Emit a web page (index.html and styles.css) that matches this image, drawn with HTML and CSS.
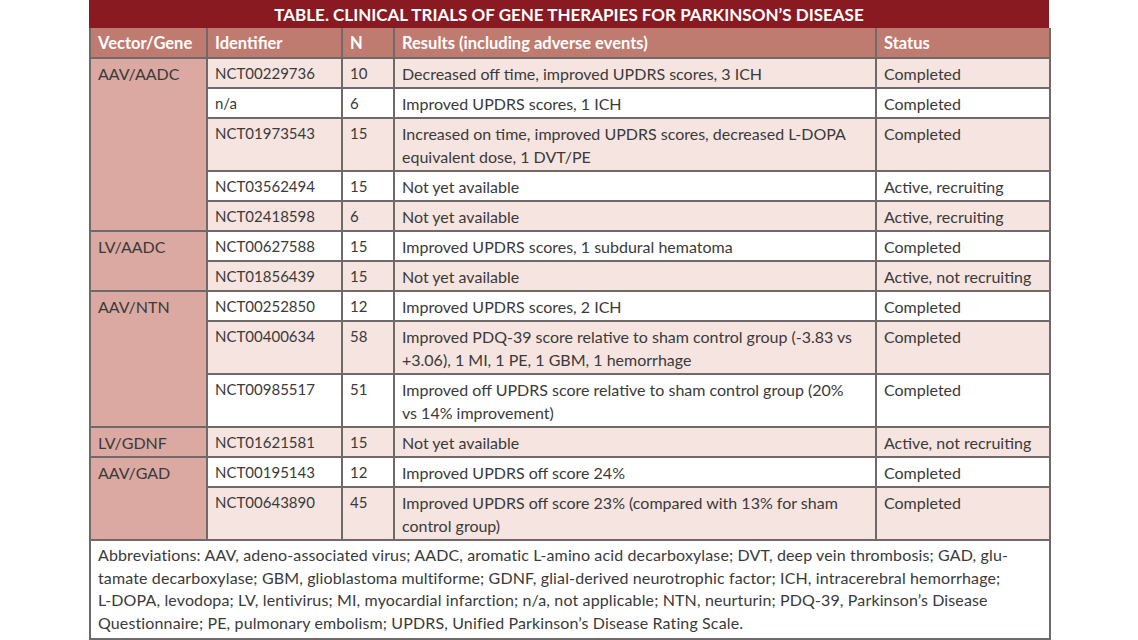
FILE: index.html
```html
<!DOCTYPE html>
<html>
<head>
<meta charset="utf-8">
<link rel="stylesheet" href="styles.css">
</head>
<body>
<div class="wrap">
  <div class="title">TABLE. CLINICAL TRIALS OF GENE THERAPIES FOR PARKINSON’S DISEASE</div>
  <table class="trials">
    <colgroup>
      <col class="c-vec"><col class="c-id"><col class="c-n"><col class="c-res"><col class="c-stat">
    </colgroup>
    <thead>
      <tr><th>Vector/Gene</th><th>Identifier</th><th>N</th><th>Results (including adverse events)</th><th>Status</th></tr>
    </thead>
    <tbody>
      <tr class="odd"><td class="vec" rowspan="5">AAV/AADC</td><td class="id">NCT00229736</td><td class="num">10</td><td class="res">Decreased off time, improved UPDRS scores, 3 ICH</td><td>Completed</td></tr>
      <tr><td class="id">n/a</td><td class="num">6</td><td class="res">Improved UPDRS scores, 1 ICH</td><td>Completed</td></tr>
      <tr class="odd"><td class="id">NCT01973543</td><td class="num">15</td><td class="res">Increased on time, improved UPDRS scores, decreased L-DOPA equivalent dose, 1 DVT/PE</td><td>Completed</td></tr>
      <tr><td class="id">NCT03562494</td><td class="num">15</td><td class="res">Not yet available</td><td>Active, recruiting</td></tr>
      <tr class="odd"><td class="id">NCT02418598</td><td class="num">6</td><td class="res">Not yet available</td><td>Active, recruiting</td></tr>
      <tr><td class="vec" rowspan="2">LV/AADC</td><td class="id">NCT00627588</td><td class="num">15</td><td class="res">Improved UPDRS scores, 1 subdural hematoma</td><td>Completed</td></tr>
      <tr class="odd"><td class="id">NCT01856439</td><td class="num">15</td><td class="res">Not yet available</td><td>Active, not recruiting</td></tr>
      <tr><td class="vec" rowspan="3">AAV/NTN</td><td class="id">NCT00252850</td><td class="num">12</td><td class="res">Improved UPDRS scores, 2 ICH</td><td>Completed</td></tr>
      <tr class="odd"><td class="id">NCT00400634</td><td class="num">58</td><td class="res">Improved PDQ-39 score relative to sham control group (-3.83 vs +3.06), 1 MI, 1 PE, 1 GBM, 1 hemorrhage</td><td>Completed</td></tr>
      <tr><td class="id">NCT00985517</td><td class="num">51</td><td class="res">Improved off UPDRS score relative to sham control group (20% vs 14% improvement)</td><td>Completed</td></tr>
      <tr class="odd"><td class="vec">LV/GDNF</td><td class="id">NCT01621581</td><td class="num">15</td><td class="res">Not yet available</td><td>Active, not recruiting</td></tr>
      <tr><td class="vec" rowspan="2">AAV/GAD</td><td class="id">NCT00195143</td><td class="num">12</td><td class="res">Improved UPDRS off score 24%</td><td>Completed</td></tr>
      <tr class="odd"><td class="id">NCT00643890</td><td class="num">45</td><td class="res">Improved UPDRS off score 23% (compared with 13% for sham control group)</td><td>Completed</td></tr>
    </tbody>
    <tfoot>
      <tr><td colspan="5" class="abbr">Abbreviations: AAV, adeno-associated virus; AADC, aromatic L-amino acid decarboxylase; DVT, deep vein thrombosis; GAD, glu-<br>tamate decarboxylase; GBM, glioblastoma multiforme; GDNF, glial-derived neurotrophic factor; ICH, intracerebral hemorrhage;<br>L-DOPA, levodopa; LV, lentivirus; MI, myocardial infarction; n/a, not applicable; NTN, neurturin; PDQ-39, Parkinson’s Disease<br>Questionnaire; PE, pulmonary embolism; UPDRS, Unified Parkinson’s Disease Rating Scale.</td></tr>
    </tfoot>
  </table>
</div>
</body>
</html>
```

FILE: styles.css
```css
html, body {
  margin: 0;
  padding: 0;
  background: #ffffff;
}
body {
  font-family: "Lato", "Open Sans", sans-serif;
  font-size: 16px;
  color: #3a3a3a;
}
.wrap {
  width: 960px;
  margin: 0 auto;
}
.title {
  height: 28px;
  line-height: 30px;
  background: #8a1a22;
  color: #ffffff;
  font-weight: 700;
  font-size: 17px;
  text-align: center;
}
.trials {
  width: 960px;
  border-collapse: collapse;
  table-layout: fixed;
}
.c-vec { width: 117px; }
.c-id { width: 135px; }
.c-n { width: 52px; }
.c-res { width: 482px; }
.c-stat { width: 174px; }
.trials th, .trials td {
  border: 2px solid #6f6a69;
  padding: 3px 8px 2px 7px;
  line-height: 23px;
  text-align: left;
  vertical-align: top;
}
.trials td.id, .trials td.num {
  font-size: 15px;
}
.trials td.res {
  padding-right: 18px;
}
.trials thead th {
  background: #c07b71;
  color: #ffffff;
  font-weight: 700;
  font-size: 16.5px;
  padding-top: 4px;
  padding-bottom: 2px;
  border-top: none;
}
.trials tbody tr { background: #ffffff; }
.trials tbody tr.odd { background: #f6e4e0; }
.trials td.vec { background: #dba9a1; }
.trials td.abbr {
  background: #ffffff;
  padding: 3px 8px 3px 7px;
  line-height: 22.7px;
  letter-spacing: 0.13px;
  color: #3a3a3a;
}
```
